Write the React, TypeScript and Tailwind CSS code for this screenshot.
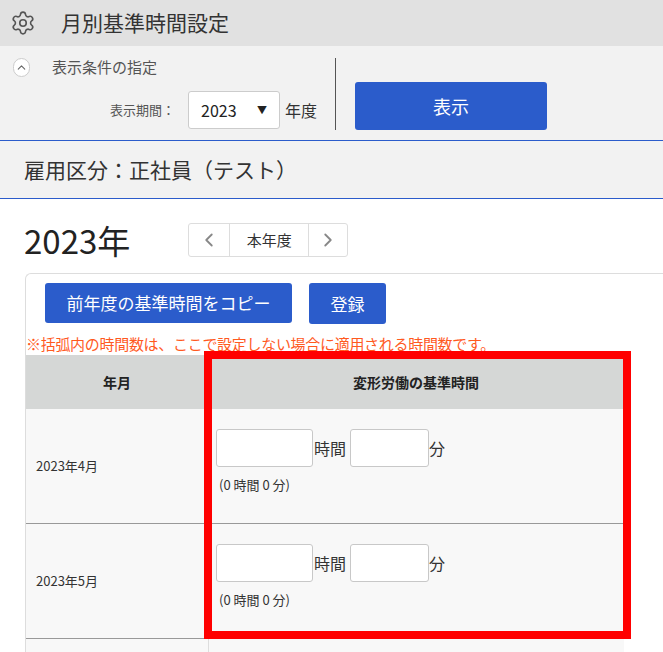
import React from 'react';
import { Settings, ChevronUp, ChevronLeft, ChevronRight } from 'lucide-react';

const months = ['2023年4月', '2023年5月'];

function TimeCell() {
  return (
    <div className="pl-[7px] pt-[20px]">
      <div className="flex items-center">
        <div className="w-[97px] h-[38px] bg-white border border-[#c8c8c8] rounded-[3px]"></div>
        <span className="text-[16px] text-[#333] mx-[1px]">時間</span>
        <div className="ml-[3px] w-[79px] h-[38px] bg-white border border-[#c8c8c8] rounded-[3px]"></div>
        <span className="text-[16px] text-[#333]">分</span>
      </div>
      <div className="mt-[8px] ml-[3px] text-[13px] text-[#333]">(0 時間 0 分)</div>
    </div>
  );
}

export default function App() {
  return (
    <div className="w-[663px] h-[652px] overflow-hidden bg-white relative" style={{ fontFamily: '"Noto Sans CJK JP", "Noto Sans", sans-serif' }}>
      <div className="h-[46px] bg-[#e1e1e1] flex items-center pl-[10px]">
        <Settings size={26} strokeWidth={1.5} className="text-[#555]" />
        <span className="ml-[25px] text-[21px] text-[#333]">月別基準時間設定</span>
      </div>
      <div className="h-[95px] bg-[#f2f2f2] border-b border-[#2b5ccb] flex">
        <div className="w-[335px] pt-[10px] pl-[13px]">
          <div className="flex items-center">
            <div className="w-[17px] h-[19px] rounded-full border border-[#ccc] bg-white flex items-center justify-center">
              <ChevronUp size={13} className="text-[#666]" />
            </div>
            <span className="ml-[22px] text-[15px] text-[#555]">表示条件の指定</span>
          </div>
          <div className="flex items-center mt-[12px] pl-[97px]">
            <span className="text-[13px] text-[#555]">表示期間：</span>
            <div className="ml-[13px] w-[92px] h-[38px] bg-white border border-[#ccc] rounded-[3px] flex items-center justify-between px-[12px]">
              <span className="text-[16px] text-[#222]">2023</span>
              <span className="text-[10px] text-[#222]">▼</span>
            </div>
            <span className="ml-[5px] text-[16px] text-[#333]">年度</span>
          </div>
        </div>
        <div className="w-px bg-[#555] mt-[12px] h-[72px]"></div>
        <div className="ml-[19px] mt-[36px] w-[192px] h-[48px] bg-[#2b5ccb] rounded-[3px] flex items-center justify-center text-white text-[18px]">表示</div>
      </div>
      <div className="h-[58px] bg-[#f2f2f2] border-b border-[#2b5ccb] flex items-center pl-[24px] text-[21px] text-[#333]">雇用区分：正社員（テスト）</div>
      <div className="flex items-center pl-[24px] pt-[24px]">
        <span className="text-[33px] text-[#222] leading-none">2023年</span>
        <div className="ml-[58px] flex h-[34px] border border-[#ddd] rounded-[3px] text-[#888]">
          <div className="w-[40px] flex items-center justify-center"><ChevronLeft size={22} /></div>
          <div className="w-[80px] border-x border-[#ddd] flex items-center justify-center text-[15px] text-[#333]">本年度</div>
          <div className="w-[38px] flex items-center justify-center"><ChevronRight size={22} /></div>
        </div>
      </div>
      <div className="ml-[25px] mt-[16px] border-t border-l border-[#ddd] rounded-tl-[6px]">
        <div className="flex gap-[17px] pl-[19px] pt-[9px]">
          <div className="w-[247px] h-[40px] bg-[#2b5ccb] rounded-[3px] text-white text-[17px] flex items-center justify-center">前年度の基準時間をコピー</div>
          <div className="w-[77px] h-[41px] bg-[#2b5ccb] rounded-[3px] text-white text-[17px] flex items-center justify-center">登録</div>
        </div>
        <div className="mt-[9px] text-[15px] text-[#ff5a1f] leading-[22px] tracking-[-0.3px]">※括弧内の時間数は、ここで設定しない場合に適用される時間数です。</div>
        <div className="w-[598px]">
          <div className="flex h-[54px] bg-[#d5d7d6] font-bold text-[14px] text-[#222]">
            <div className="w-[182px] flex items-center justify-center">年月</div>
            <div className="flex-1 flex items-center justify-center">変形労働の基準時間</div>
          </div>
          {months.map((m) => (
            <div key={m} className="flex h-[115px] bg-[#f8f8f8] border-b border-[#999]">
              <div className="w-[182px] flex items-center pl-[10px] text-[13px] text-[#333]">{m}</div>
              <div className="flex-1 border-l border-[#ddd]"><TimeCell /></div>
            </div>
          ))}
          <div className="flex h-[40px] bg-[#f8f8f8]">
            <div className="w-[182px]"></div>
            <div className="flex-1 border-l border-[#ddd]"></div>
          </div>
        </div>
      </div>
      <div className="absolute left-[204px] top-[351px] w-[427px] h-[288px] border-[8px] border-[#ff0000]"></div>
    </div>
  );
}
